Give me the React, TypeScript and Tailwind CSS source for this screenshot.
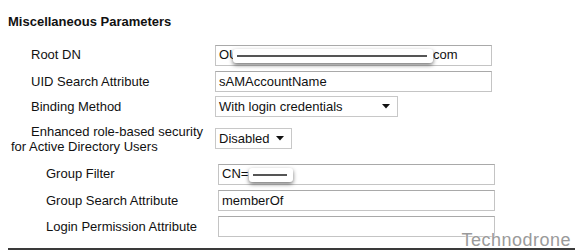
const Redact = ({ width }: { width: number }) => (
  <span
    className="absolute top-[3px] h-[14px] rounded-[3px] bg-white shadow-[0_2px_4px_rgba(0,0,0,0.55)]"
    style={{ width }}
  >
    <span className="absolute left-[4px] right-[6px] top-[6px] h-[2px] bg-[#555]" />
  </span>
);

const Field = ({ value, width, children }: { value?: string; width: number; children?: React.ReactNode }) => (
  <div
    className="relative flex h-[21px] items-center border border-[#c4c4c4] border-t-[#a9a9a9] bg-white px-[3px] text-[13px] text-[#111]"
    style={{ width }}
  >
    <span>{value}</span>
    {children}
  </div>
);

const Select = ({ value, width }: { value: string; width: number }) => (
  <div
    className="flex h-[21px] items-center justify-between border border-[#c8c8c8] bg-white pl-[3px] pr-[7px] text-[13px] text-[#111]"
    style={{ width }}
  >
    <span>{value}</span>
    <svg width="8" height="5" viewBox="0 0 8 5">
      <path d="M0 0h8L4 4.5z" fill="#111" />
    </svg>
  </div>
);

export default function App() {
  return (
    <div className="relative h-[251px] w-[575px] overflow-hidden bg-white font-['Liberation_Sans',Arial,sans-serif] text-[13px] text-[#111]">
      <div className="pl-[8px] pt-[12px] text-[13px] font-bold">Miscellaneous Parameters</div>

      <div className="mt-[13px] flex flex-col">
        <div className="flex h-[21px] items-center">
          <div className="w-[215px] pl-[31px]">Root DN</div>
          <Field value="OU" width={277}>
            <span className="absolute left-[17px] top-0 text-[13px]">
              <Redact width={200} />
            </span>
            <span className="absolute left-[217px]">com</span>
          </Field>
        </div>
        <div className="mt-[5px] flex h-[22px] items-center">
          <div className="w-[215px] pl-[31px]">UID Search Attribute</div>
          <Field value="sAMAccountName" width={277} />
        </div>
        <div className="mt-[4px] flex h-[20px] items-center">
          <div className="w-[215px] pl-[31px]">Binding Method</div>
          <Select value="With login credentials" width={183} />
        </div>
        <div className="mt-[7px] flex items-center">
          <div className="w-[215px] pl-[11px] indent-[20px] leading-[15px]">
            Enhanced role-based security for Active Directory Users
          </div>
          <Select value="Disabled" width={77} />
        </div>
        <div className="mt-[10px] flex h-[21px] items-center">
          <div className="w-[218px] pl-[46px]">Group Filter</div>
          <Field value="CN=" width={277}>
            <span className="absolute left-[30px] top-0">
              <Redact width={44} />
            </span>
          </Field>
        </div>
        <div className="mt-[5px] flex h-[22px] items-center">
          <div className="w-[218px] pl-[46px]">Group Search Attribute</div>
          <Field value="memberOf" width={277} />
        </div>
        <div className="mt-[4px] flex h-[22px] items-center">
          <div className="w-[218px] pl-[46px]">Login Permission Attribute</div>
          <Field width={277} />
        </div>
      </div>

      <div className="ml-[8px] mt-[10px] h-[2px] bg-[#3a3a3a]" />

      <div className="absolute right-[4px] top-[231px] text-[18px] leading-none tracking-[0.5px] text-[#9a9a9a] [text-shadow:0_0_1px_#fff,0_0_2px_#fff]">
        Technodrone
      </div>
    </div>
  );
}
